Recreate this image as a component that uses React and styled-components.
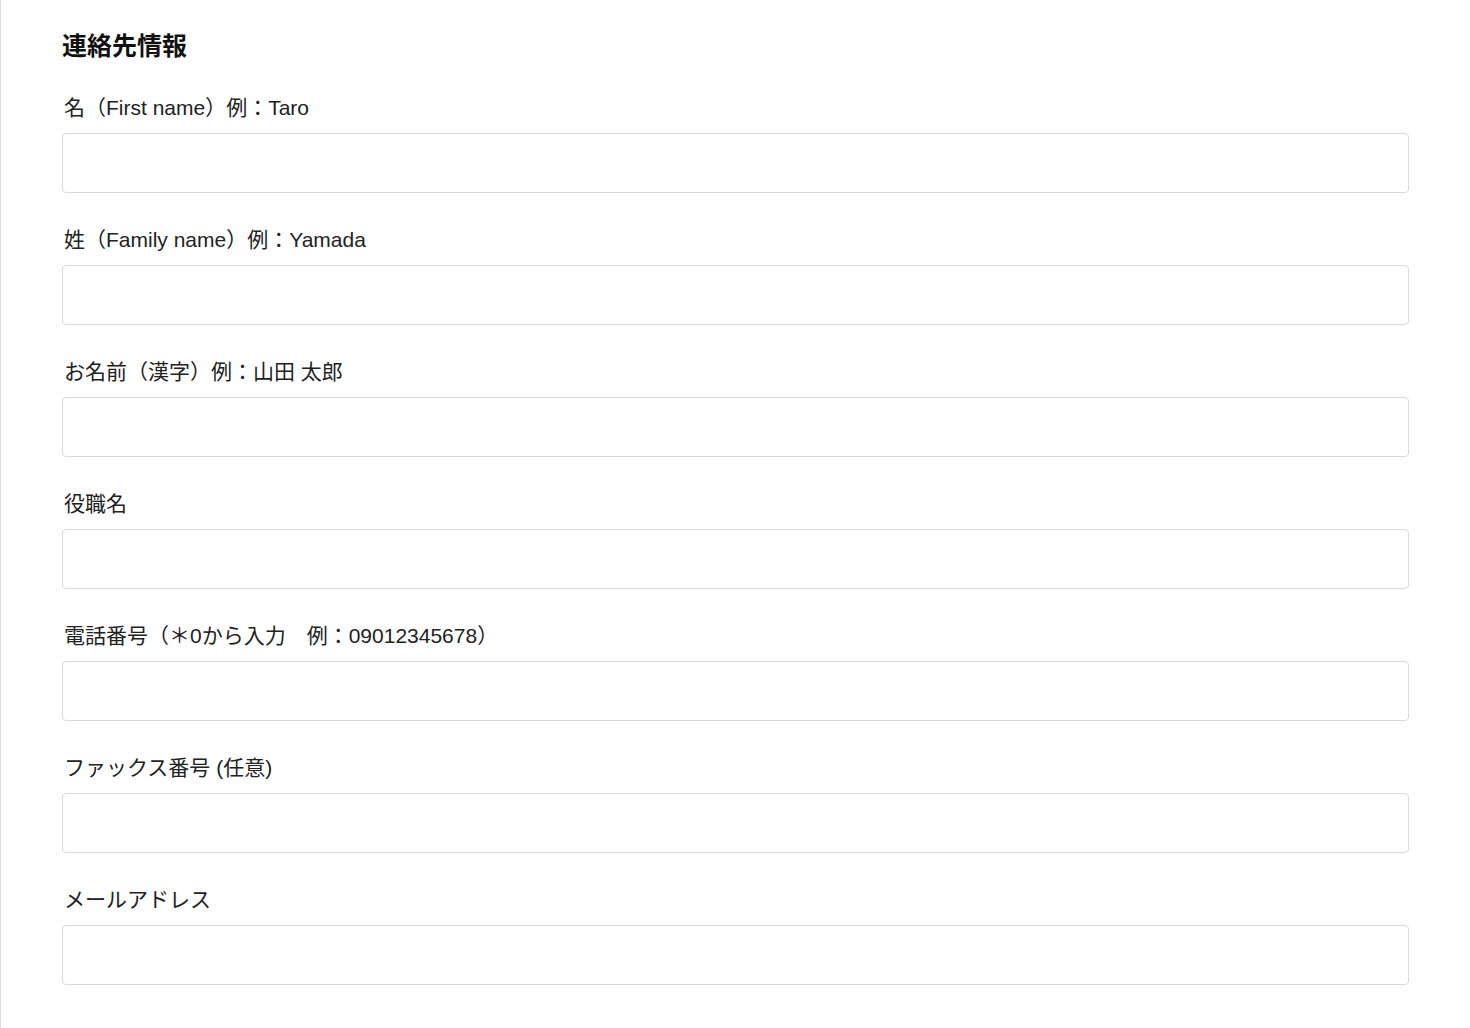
import React from "react";
import styled, { createGlobalStyle } from "styled-components";

const GlobalStyle = createGlobalStyle`
  html, body {
    margin: 0;
    padding: 0;
    background: #ffffff;
  }
  body {
    font-family: "Liberation Sans", "Noto Sans CJK JP", sans-serif;
    color: #222222;
  }
`;

const fields = [
  { id: "first", label: "名（First name）例：Taro" },
  { id: "family", label: "姓（Family name）例：Yamada" },
  { id: "kanji", label: "お名前（漢字）例：山田 太郎" },
  { id: "title", label: "役職名" },
  { id: "tel", label: "電話番号（＊0から入力　例：09012345678）" },
  { id: "fax", label: "ファックス番号 (任意)" },
  { id: "mail", label: "メールアドレス" },
];

export default function App() {
  return (
    <>
      <GlobalStyle />
      <Page>
        <Heading>連絡先情報</Heading>
        {fields.map((f) => (
          <Field key={f.id}>
            <Label htmlFor={f.id}>{f.label}</Label>
            <Input id={f.id} type="text" />
          </Field>
        ))}
      </Page>
    </>
  );
}

const Page = styled.div`
  border-left: 1px solid #dddddd;
  min-height: 1028px;
  box-sizing: border-box;
  padding: 31px 61px 40px 61px;
`;

const Heading = styled.h2`
  margin: 0 0 1px 0;
  font-size: 25px;
  line-height: 30px;
  font-weight: bold;
  color: #111111;
`;

const Field = styled.div`
  display: flex;
  flex-direction: column;
  margin-top: 32px;
`;

const Label = styled.label`
  font-size: 21px;
  line-height: 30px;
  margin-bottom: 10px;
  padding-left: 2px;
  color: #222222;
`;

const Input = styled.input`
  box-sizing: border-box;
  width: 100%;
  height: 60px;
  border: 1px solid #dadada;
  border-radius: 4px;
  background: #ffffff;
  outline: none;
  font-size: 18px;
  padding: 0 14px;
`;
